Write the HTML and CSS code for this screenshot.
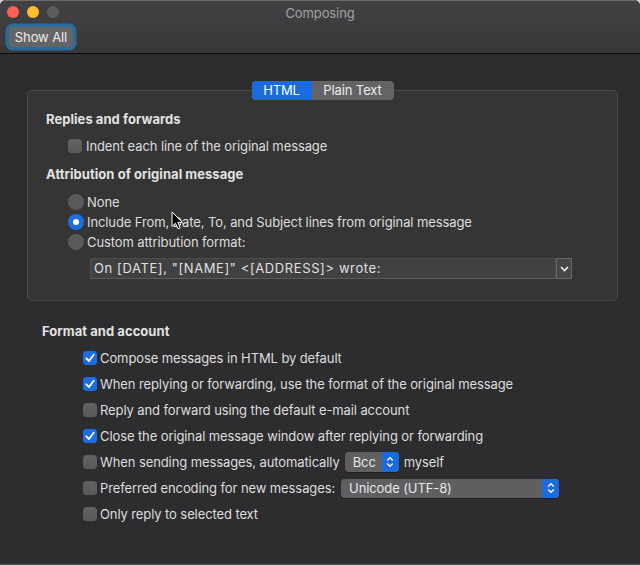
FILE: index.html
```html
<!DOCTYPE html>
<html>
<head>
<meta charset="utf-8">
<link rel="stylesheet" href="styles.css">
</head>
<body>
<div class="window">
  <div class="titlebar">
    <div class="titlerow">
      <div class="lights">
        <span class="light red"></span>
        <span class="light yellow"></span>
        <span class="light gray"></span>
      </div>
      <div class="title">Composing</div>
      <div></div>
    </div>
    <div class="toolbar">
      <button class="showall">Show All</button>
    </div>
  </div>

  <div class="content">
    <div class="segwrap">
      <div class="seg">
        <span class="segitem active">HTML</span>
        <span class="segitem">Plain Text</span>
      </div>
    </div>
    <div class="group">
      <div class="heading">Replies and forwards</div>
      <div class="row gi">
        <span class="cb"></span>
        <span class="label">Indent each line of the original message</span>
      </div>
      <div class="heading h2">Attribution of original message</div>
      <div class="radios">
        <div class="row rrow"><span class="radio"></span><span class="label">None</span></div>
        <div class="row rrow"><span class="radio on"></span><span class="label">Include From, Date, To, and Subject lines from original message</span></div>
        <div class="row rrow"><span class="radio"></span><span class="label">Custom attribution format:</span></div>
      </div>
      <div class="combo">
        <div class="field">On [DATE], "[NAME]" &lt;[ADDRESS]&gt; wrote:</div>
        <div class="combobtn">
          <svg width="9" height="6" viewBox="0 0 9 6"><polyline points="1,1 4.5,4.5 8,1" fill="none" stroke="#f0f0f0" stroke-width="1.6"/></svg>
        </div>
      </div>
    </div>

    <div class="heading lower">Format and account</div>
    <div class="checks">
      <div class="crow"><span class="cb on"><svg width="14" height="14" viewBox="0 0 14 14"><polyline points="3.3,7.3 6,10 10.7,3.8" fill="none" stroke="#fff" stroke-width="1.8" stroke-linecap="round" stroke-linejoin="round"/></svg></span><span class="label">Compose messages in HTML by default</span></div>
      <div class="crow"><span class="cb on"><svg width="14" height="14" viewBox="0 0 14 14"><polyline points="3.3,7.3 6,10 10.7,3.8" fill="none" stroke="#fff" stroke-width="1.8" stroke-linecap="round" stroke-linejoin="round"/></svg></span><span class="label">When replying or forwarding, use the format of the original message</span></div>
      <div class="crow"><span class="cb"></span><span class="label">Reply and forward using the default e-mail account</span></div>
      <div class="crow"><span class="cb on"><svg width="14" height="14" viewBox="0 0 14 14"><polyline points="3.3,7.3 6,10 10.7,3.8" fill="none" stroke="#fff" stroke-width="1.8" stroke-linecap="round" stroke-linejoin="round"/></svg></span><span class="label">Close the original message window after replying or forwarding</span></div>
      <div class="crow"><span class="cb"></span><span class="label">When sending messages, automatically</span>
        <span class="popup bcc"><span class="ptext">Bcc</span><span class="stepper"><svg width="8" height="12" viewBox="0 0 8 12"><polyline points="1.2,4.5 4,1.7 6.8,4.5" fill="none" stroke="#fff" stroke-width="1.3"/><polyline points="1.2,7.5 4,10.3 6.8,7.5" fill="none" stroke="#fff" stroke-width="1.3"/></svg></span></span>
        <span class="label after">myself</span></div>
      <div class="crow"><span class="cb"></span><span class="label">Preferred encoding for new messages:</span>
        <span class="popup enc"><span class="ptext">Unicode (UTF-8)</span><span class="stepper"><svg width="8" height="12" viewBox="0 0 8 12"><polyline points="1.2,4.5 4,1.7 6.8,4.5" fill="none" stroke="#fff" stroke-width="1.3"/><polyline points="1.2,7.5 4,10.3 6.8,7.5" fill="none" stroke="#fff" stroke-width="1.3"/></svg></span></span></div>
      <div class="crow"><span class="cb"></span><span class="label">Only reply to selected text</span></div>
    </div>
  </div>

  <svg class="cursor" width="13" height="19" viewBox="0 0 13 19"><path d="M1 1 L1 15.5 L4.5 12.2 L7 17.8 L9.2 16.8 L6.8 11.3 L11.5 11.3 Z" fill="#000" stroke="#fff" stroke-width="1"/></svg>
</div>
</body>
</html>
```

FILE: styles.css
```css
html, body {
  margin: 0;
  padding: 0;
  background: #cfcfcf;
}
body {
  font-family: Inter, "Noto Sans", "Liberation Sans", sans-serif;
  font-size: 13px;
  letter-spacing: -0.1px;
  color: #dedede;
}
.window {
  width: 640px;
  height: 565px;
  box-sizing: border-box;
  background: #2d2d2f;
  border-radius: 6px 6px 0 0;
  border-bottom: 1px solid #5a5a5a;
  overflow: hidden;
  position: relative;
  display: flex;
  flex-direction: column;
}
.titlebar {
  height: 54px;
  box-sizing: border-box;
  background: linear-gradient(#424244, #38383a);
  border-top: 1px solid #6a6a6a;
  border-bottom: 1px solid #0b0b0b;
  flex: none;
}
.titlerow {
  display: grid;
  grid-template-columns: 1fr auto 1fr;
  height: 21px;
  align-items: center;
}
.lights {
  display: flex;
  gap: 8px;
  padding-left: 7px;
  padding-top: 1px;
}
.light {
  width: 12px;
  height: 12px;
  border-radius: 50%;
  display: block;
}
.red { background: #fe5f57; }
.yellow { background: #febc2e; }
.gray { background: #5d5d5f; }
.title {
  color: #a2a2a2;
  font-size: 13px;
  line-height: 16px;
  padding-top: 2px;
}
.toolbar {
  padding: 5px 0 0 9px;
}
.showall {
  display: block;
  width: 64px;
  height: 20px;
  padding: 0;
  border: none;
  border-radius: 4px;
  background: #656567;
  color: #ececec;
  font-family: inherit;
  font-size: 13px;
  letter-spacing: -0.1px;
  line-height: 20px;
  box-shadow: 0 0 0 3.5px #2a6b9e;
}
.content {
  padding: 27px 22px 0 27px;
  display: flex;
  flex-direction: column;
}
.segwrap {
  display: flex;
  justify-content: center;
  margin-bottom: -10px;
  position: relative;
  z-index: 1;
}
.seg {
  display: flex;
  height: 19px;
  border-radius: 4px;
  overflow: hidden;
  background: #646466;
}
.segitem {
  display: block;
  line-height: 19px;
  color: #ececec;
  text-align: center;
}
.segitem:first-child { width: 60px; }
.segitem:last-child { width: 82px; }
.segitem.active {
  background: #1a6be0;
  color: #fff;
}
.group {
  border: 1px solid #4a4a4a;
  border-radius: 5px;
  background: #353535;
  padding: 20px 18px 21px 18px;
}
.heading {
  font-weight: 700;
  letter-spacing: 0.05px;
  line-height: 16px;
  height: 16px;
  color: #e2e2e2;
}
.row {
  display: flex;
  align-items: center;
  height: 20px;
}
.gi {
  margin-top: 9px;
  padding-left: 22px;
}
.h2 { margin-top: 10px; }
.radios {
  margin-top: 10px;
  padding-left: 22px;
}
.label {
  white-space: nowrap;
  line-height: 16px;
}
.cb {
  width: 14px;
  height: 14px;
  box-sizing: border-box;
  border-radius: 3px;
  background: linear-gradient(#626264, #58585a);
  border: 1px solid #5e5e60;
  margin-right: 4px;
  flex: none;
  display: flex;
  align-items: center;
  justify-content: center;
}
.cb.on {
  background: #1c6de2;
  border-color: #1c6de2;
}
.cb svg { display: block; margin: -1px; }
.radio {
  width: 16px;
  height: 16px;
  box-sizing: border-box;
  border-radius: 50%;
  background: #59595b;
  margin-right: 3px;
  flex: none;
  display: flex;
  align-items: center;
  justify-content: center;
}
.radio.on { background: #1c6de2; }
.radio.on::after {
  content: "";
  width: 6px;
  height: 6px;
  border-radius: 50%;
  background: #fff;
}
.combo {
  display: flex;
  margin-top: 6px;
  margin-left: 44px;
  width: 482px;
  height: 21px;
}
.field {
  flex: 1;
  box-sizing: border-box;
  background: #414141;
  border: 1px solid #4d4d4d;
  border-bottom-color: #5b5b5b;
  padding-left: 3px;
  line-height: 19px;
  letter-spacing: 0.6px;
  color: #e0e0e0;
  white-space: nowrap;
}
.combobtn {
  width: 16px;
  box-sizing: border-box;
  background: #474747;
  border: 1px solid #676767;
  display: flex;
  align-items: center;
  justify-content: center;
}
.lower {
  margin-top: 22px;
  padding-left: 15px;
}
.checks {
  margin-top: 6px;
  padding-left: 56px;
}
.crow {
  display: flex;
  align-items: center;
  height: 26px;
}
.crow .cb { margin-right: 3px; }
.popup {
  display: flex;
  height: 20px;
  border-radius: 4px;
  overflow: hidden;
  background: #5f5f61;
  margin-left: 5px;
  box-shadow: 0 1px 1px rgba(0,0,0,0.3);
}
.ptext {
  flex: 1;
  line-height: 20px;
  color: #e8e8e8;
  padding-left: 8px;
  white-space: nowrap;
}
.stepper {
  width: 17px;
  background: #1b6be0;
  display: flex;
  align-items: center;
  justify-content: center;
}
.bcc { width: 54px; }
.enc { width: 218px; height: 19px; margin-left: 6px; }
.enc .ptext { line-height: 19px; }
.after { margin-left: 5px; }
.cursor {
  position: absolute;
  left: 171px;
  top: 211px;
}
```
